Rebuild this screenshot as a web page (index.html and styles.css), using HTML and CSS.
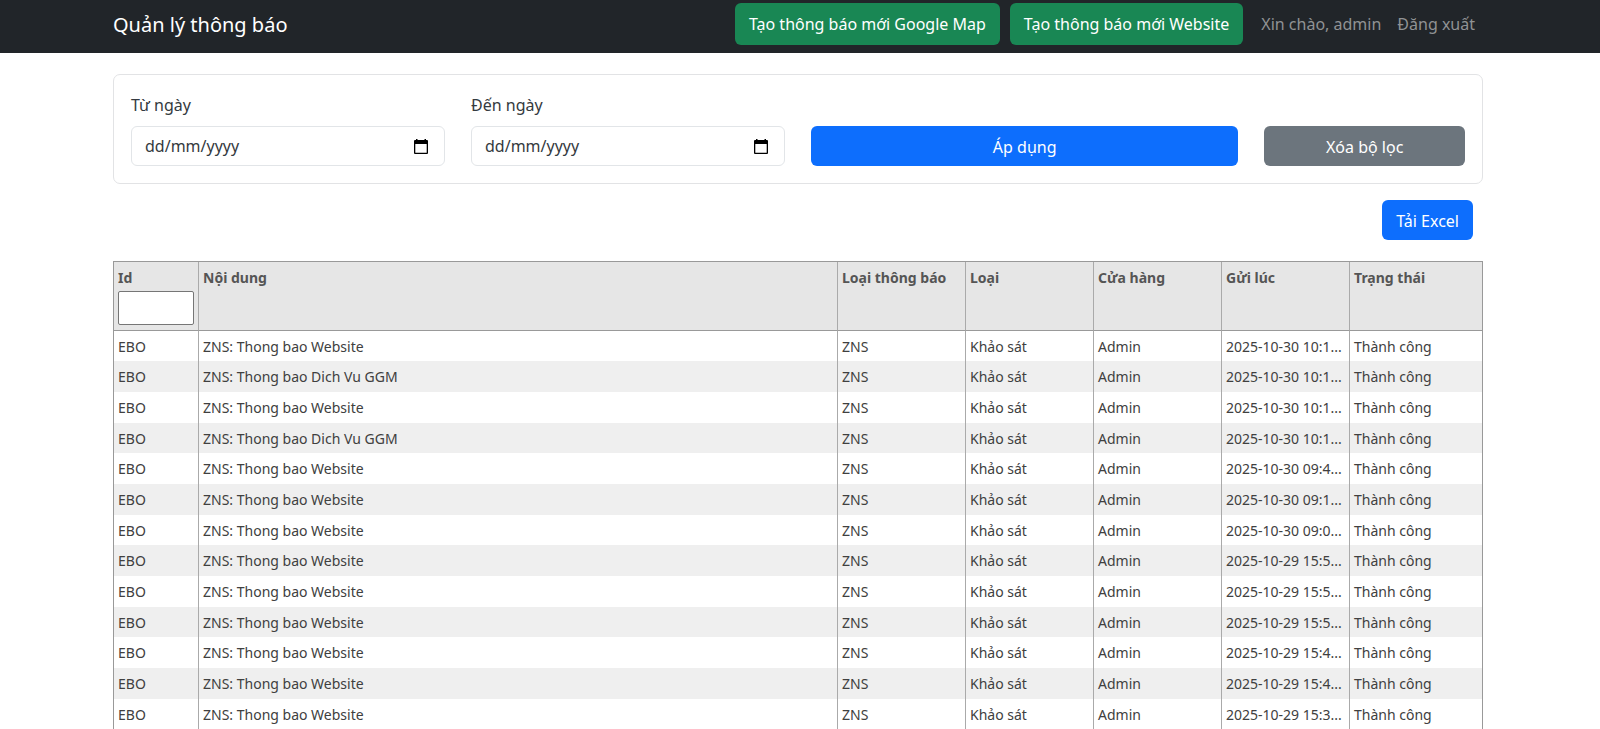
FILE: index.html
```html
<!DOCTYPE html>
<html lang="vi">
<head>
    <meta charset="UTF-8">
    <meta name="viewport" content="width=device-width, initial-scale=1">
    <title>Quản lý thông báo</title>
    <link rel="stylesheet" href="styles.css">
</head>
<body>
    <nav class="navbar">
        <div class="container navbar-inner">
            <a class="navbar-brand" href="/">Quản lý thông báo</a>
            <div class="navbar-actions">
                <a class="btn btn-success" href="/create-map">Tạo thông báo mới Google Map</a>
                <a class="btn btn-success" href="/create-website">Tạo thông báo mới Website</a>
            </div>
            <span class="nav-text">Xin chào, admin</span>
            <a class="nav-text" href="/logout">Đăng xuất</a>
        </div>
    </nav>

    <main class="container">
        <form class="filter" action="/" method="get">
            <div class="field">
                <label for="fromDate">Từ ngày</label>
                <div class="date-box">
                    <input type="text" id="fromDate" name="from" placeholder="dd/mm/yyyy">
                    <button type="button" class="date-btn" aria-label="Từ ngày">
                        <svg viewBox="0 0 14 15" width="14" height="15"><path d="M2 0h1.500v1h7V0H12v1h1a1 1 0 0 1 1 1v12a1 1 0 0 1-1 1H1a1 1 0 0 1-1-1V2a1 1 0 0 1 1-1h1zM1.300 5v8.700h11.400V5z" fill-rule="evenodd"/></svg>
                    </button>
                </div>
            </div>
            <div class="field">
                <label for="toDate">Đến ngày</label>
                <div class="date-box">
                    <input type="text" id="toDate" name="to" placeholder="dd/mm/yyyy">
                    <button type="button" class="date-btn" aria-label="Đến ngày">
                        <svg viewBox="0 0 14 15" width="14" height="15"><path d="M2 0h1.500v1h7V0H12v1h1a1 1 0 0 1 1 1v12a1 1 0 0 1-1 1H1a1 1 0 0 1-1-1V2a1 1 0 0 1 1-1h1zM1.300 5v8.700h11.400V5z" fill-rule="evenodd"/></svg>
                    </button>
                </div>
            </div>
            <button type="submit" class="btn btn-primary btn-apply">Áp dụng</button>
            <button type="reset" class="btn btn-secondary btn-clear">Xóa bộ lọc</button>
        </form>

        <div class="toolbar">
            <button type="button" class="btn btn-primary">Tải Excel</button>
        </div>

        <table class="grid">
            <colgroup>
                <col class="col-id">
                <col>
                <col class="col-md">
                <col class="col-md">
                <col class="col-md">
                <col class="col-md">
                <col class="col-status">
            </colgroup>
            <thead>
                <tr>
                    <th><label for="idFilter">Id</label><input type="search" id="idFilter"></th>
                    <th>Nội dung</th>
                    <th>Loại thông báo</th>
                    <th>Loại</th>
                    <th>Cửa hàng</th>
                    <th>Gửi lúc</th>
                    <th>Trạng thái</th>
                </tr>
            </thead>
            <tbody>
                <tr><td>EBO</td><td>ZNS: Thong bao Website</td><td>ZNS</td><td>Khảo sát</td><td>Admin</td><td>2025-10-30 10:1...</td><td>Thành công</td></tr>
                <tr><td>EBO</td><td>ZNS: Thong bao Dich Vu GGM</td><td>ZNS</td><td>Khảo sát</td><td>Admin</td><td>2025-10-30 10:1...</td><td>Thành công</td></tr>
                <tr><td>EBO</td><td>ZNS: Thong bao Website</td><td>ZNS</td><td>Khảo sát</td><td>Admin</td><td>2025-10-30 10:1...</td><td>Thành công</td></tr>
                <tr><td>EBO</td><td>ZNS: Thong bao Dich Vu GGM</td><td>ZNS</td><td>Khảo sát</td><td>Admin</td><td>2025-10-30 10:1...</td><td>Thành công</td></tr>
                <tr><td>EBO</td><td>ZNS: Thong bao Website</td><td>ZNS</td><td>Khảo sát</td><td>Admin</td><td>2025-10-30 09:4...</td><td>Thành công</td></tr>
                <tr><td>EBO</td><td>ZNS: Thong bao Website</td><td>ZNS</td><td>Khảo sát</td><td>Admin</td><td>2025-10-30 09:1...</td><td>Thành công</td></tr>
                <tr><td>EBO</td><td>ZNS: Thong bao Website</td><td>ZNS</td><td>Khảo sát</td><td>Admin</td><td>2025-10-30 09:0...</td><td>Thành công</td></tr>
                <tr><td>EBO</td><td>ZNS: Thong bao Website</td><td>ZNS</td><td>Khảo sát</td><td>Admin</td><td>2025-10-29 15:5...</td><td>Thành công</td></tr>
                <tr><td>EBO</td><td>ZNS: Thong bao Website</td><td>ZNS</td><td>Khảo sát</td><td>Admin</td><td>2025-10-29 15:5...</td><td>Thành công</td></tr>
                <tr><td>EBO</td><td>ZNS: Thong bao Website</td><td>ZNS</td><td>Khảo sát</td><td>Admin</td><td>2025-10-29 15:5...</td><td>Thành công</td></tr>
                <tr><td>EBO</td><td>ZNS: Thong bao Website</td><td>ZNS</td><td>Khảo sát</td><td>Admin</td><td>2025-10-29 15:4...</td><td>Thành công</td></tr>
                <tr><td>EBO</td><td>ZNS: Thong bao Website</td><td>ZNS</td><td>Khảo sát</td><td>Admin</td><td>2025-10-29 15:4...</td><td>Thành công</td></tr>
                <tr><td>EBO</td><td>ZNS: Thong bao Website</td><td>ZNS</td><td>Khảo sát</td><td>Admin</td><td>2025-10-29 15:3...</td><td>Thành công</td></tr>
            </tbody>
        </table>
    </main>
</body>
</html>
```

FILE: styles.css
```css
* {
    box-sizing: border-box;
}

body {
    margin: 0;
    background-color: #fff;
    color: #343a40;
    font-family: "Segoe UI", "Noto Sans", "Open Sans", sans-serif;
    font-size: 16px;
    line-height: 25px;
}

button,
input {
    font: inherit;
    color: inherit;
}

a {
    text-decoration: none;
}

.container {
    max-width: 1396px;
    margin: 0 auto;
    padding: 0 15px 0 11px;
}

/* Navbar */
.navbar {
    background-color: #212529;
}

.navbar-inner {
    display: flex;
    align-items: center;
    height: 53px;
    padding-bottom: 5px;
}

.navbar-brand {
    margin-right: auto;
    color: #fff;
    font-size: 20px;
}

.navbar-actions {
    display: flex;
    gap: 10px;
    margin-right: 10px;
}

.nav-text {
    padding: 0 8px;
    color: #909294;
}

/* Buttons */
.btn {
    height: 40px;
    padding: 8px 13px 6px;
    border: 1px solid transparent;
    border-radius: 6px;
    color: #fff;
    text-align: center;
    white-space: nowrap;
    cursor: pointer;
}

.btn-success {
    height: 42px;
    background-color: #198754;
}

.btn-primary {
    background-color: #0d6efd;
}

.btn-secondary {
    background-color: #6c757d;
}

/* Filter */
.filter {
    display: grid;
    grid-template-columns: repeat(12, 1fr);
    gap: 26px;
    align-items: end;
    margin-top: 21px;
    padding: 18px 17px 17px;
    border: 1px solid #e2e3e5;
    border-radius: 7px;
}

.field {
    grid-column: span 3;
}

.btn-apply {
    grid-column: span 4;
}

.btn-clear {
    grid-column: span 2;
}

.field label {
    display: block;
    margin-bottom: 8px;
}

.date-box {
    display: flex;
    align-items: center;
    height: 40px;
    padding: 0 16px 0 13px;
    border: 1px solid #e2e5e8;
    border-radius: 6px;
}

.date-box input {
    flex: 1;
    min-width: 0;
    padding: 1px 0 0;
    border: 0;
    outline: 0;
    background: none;
}

.date-box input::placeholder {
    color: #343a40;
    opacity: 1;
}

.date-btn {
    display: flex;
    padding: 0;
    border: 0;
    background: none;
    color: #000;
    cursor: pointer;
}

.toolbar {
    display: flex;
    justify-content: flex-end;
    padding: 16px 10px 21px;
}

/* Notification table */
.grid {
    width: 100%;
    table-layout: fixed;
    border-collapse: separate;
    border-spacing: 0;
    border: 1px solid #999;
    border-bottom: 0;
    color: #404040;
    font-size: 14px;
    line-height: 1.62;
}

.col-id {
    width: 85px;
}

.col-md {
    width: 128px;
}

.col-status {
    width: 132px;
}

.grid th,
.grid td {
    padding: 5px 4px 3px;
    border-right: 1px solid #aaa;
    text-align: left;
    vertical-align: top;
    white-space: nowrap;
    overflow: hidden;
}

.grid th {
    padding-bottom: 5px;
    background-color: #e6e6e6;
    border-bottom: 1px solid #999;
    color: #555;
}

.grid th:last-child,
.grid td:last-child {
    border-right: 0;
}

.grid th label {
    display: block;
}

.grid th input {
    display: block;
    width: 100%;
    height: 34px;
    margin-top: 1px;
    padding: 4px;
    border: 1px solid #767676;
    border-radius: 2px;
    background-color: #fff;
}

.grid tbody tr:nth-child(even) {
    background-color: #efefef;
}
```
